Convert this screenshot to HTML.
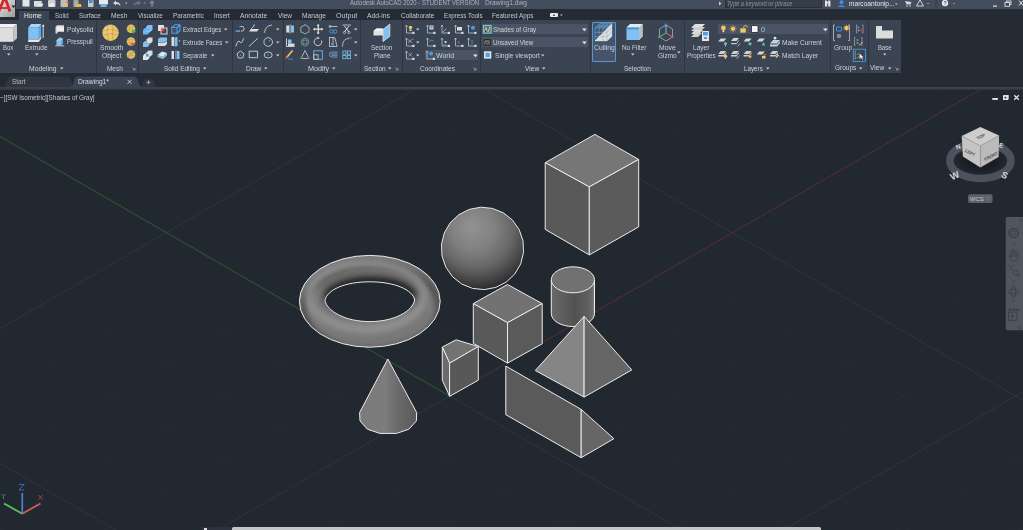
<!DOCTYPE html>
<html><head><meta charset="utf-8"><style>
*{margin:0;padding:0;box-sizing:border-box}
html,body{width:1023px;height:530px;overflow:hidden;background:#212830;font-family:"Liberation Sans",sans-serif}
.a{position:absolute}
.t{position:absolute;white-space:nowrap;font-size:6.8px;line-height:8px;height:8px;color:#dde1e7;transform-origin:0 50%}
.d{position:absolute;width:0;height:0;border-left:2px solid transparent;border-right:2px solid transparent;border-top:2px solid #d0d4da}
svg{overflow:visible}
</style></head><body>
<div class="a" style="left:0px;top:0px;width:1023px;height:9px;background:#444d5d;"></div>
<div class="a" style="left:0px;top:9px;width:1023px;height:11px;background:#242b35;"></div>
<div class="a" style="left:19px;top:11px;width:30px;height:9px;background:#3b4453;"></div>
<div class="a" style="left:0px;top:20px;width:1023px;height:53px;background:#242b35;"></div>
<div class="a" style="left:0px;top:20px;width:901px;height:53px;background:#3b4453;"></div>
<div class="a" style="left:0px;top:73px;width:1023px;height:15px;background:#242b35;"></div>
<svg class="a" style="left:0;top:88px;overflow:hidden" width="1023" height="442" viewBox="0 88 1023 442">
<defs>
<radialGradient id="sph" cx="0.45" cy="0.3" r="0.76" fx="0.36" fy="0.24"><stop offset="0" stop-color="#929292"/><stop offset="0.35" stop-color="#808080"/><stop offset="0.6" stop-color="#676767"/><stop offset="0.8" stop-color="#444"/><stop offset="0.95" stop-color="#262626"/></radialGradient>
<linearGradient id="cone" x1="0" y1="0" x2="1" y2="0"><stop offset="0" stop-color="#7a7a7a"/><stop offset="0.45" stop-color="#7c7c7c"/><stop offset="0.7" stop-color="#686868"/><stop offset="1" stop-color="#5a5a5a"/></linearGradient>
<linearGradient id="cyl" x1="0" y1="0" x2="1" y2="0"><stop offset="0" stop-color="#686868"/><stop offset="0.25" stop-color="#5e5e5e"/><stop offset="0.55" stop-color="#525252"/><stop offset="0.85" stop-color="#5f5f5f"/><stop offset="0.95" stop-color="#6a6a6a"/><stop offset="1" stop-color="#8a8a8a"/></linearGradient>
<radialGradient id="tor" cx="0.5" cy="0.45" r="0.55"><stop offset="0.6" stop-color="#6c6c6c"/><stop offset="0.85" stop-color="#7c7c7c"/><stop offset="1" stop-color="#606060"/></radialGradient>
<filter id="blur2" x="-20%" y="-20%" width="140%" height="140%"><feGaussianBlur stdDeviation="3"/></filter>
<filter id="blur3" x="-30%" y="-50%" width="160%" height="200%"><feGaussianBlur stdDeviation="4"/></filter>
<filter id="blur1" x="-20%" y="-20%" width="140%" height="140%"><feGaussianBlur stdDeviation="1.5"/></filter>
<clipPath id="torclip"><path d="M299.4 301.3a70.4 45.9 0 1 0 140.8 0a70.4 45.9 0 1 0 -140.8 0ZM325 300.5 C327 289.7 345 281.8 369.8 281.8 C394.6 281.8 412.7 289.7 414.7 300 C412.7 311 394.6 321.6 369.8 321.6 C345 321.6 327 311 325 300.5Z" clip-rule="evenodd"/></clipPath>
</defs>
<path d="M0 -451.7L1023 138.9M0 -386.4L1023 204.3M0 132.7L1023 -458.0M0 -321.0L1023 269.6M0 198.0L1023 -392.6M0 -255.7L1023 335.0M0 263.4L1023 -327.2M0 -124.9L1023 465.7M0 394.1L1023 -196.5M0 -59.6L1023 531.0M0 459.5L1023 -131.2M0 5.8L1023 596.4M0 524.8L1023 -65.8M0 71.1L1023 661.8M0 590.2L1023 -0.5M0 201.8L1023 792.5M0 720.9L1023 130.2M0 267.2L1023 857.8M0 786.2L1023 195.6M0 332.5L1023 923.2M0 851.6L1023 261.0M0 397.9L1023 988.5M0 916.9L1023 326.3M0 528.6L1023 1119.2M0 1047.7L1023 457.0M0 1113.0L1023 522.4" stroke="#252c36" stroke-width="1" fill="none"/>
<path d="M0 -190.3L1023 400.3M0 328.7L1023 -261.9M0 136.5L1023 727.1M0 655.5L1023 64.9M0 463.3L1023 1053.9M0 982.3L1023 391.7" stroke="#2e3541" stroke-width="1" fill="none"/>
<path d="M0 136.5L449.5 396" stroke="#2a5a2e" stroke-width="1" fill="none"/>
<path d="M449.5 396L1023 64.9" stroke="#552a30" stroke-width="1" fill="none"/>
<!-- torus -->
<g clip-path="url(#torclip)">
<rect x="295" y="250" width="150" height="100" fill="#787878"/>
<ellipse cx="371" cy="307" rx="67" ry="42.5" fill="none" stroke="#4a4a4a" stroke-width="7" filter="url(#blur2)"/>
<ellipse cx="366" cy="296" rx="57" ry="33" fill="none" stroke="#939393" stroke-width="8" filter="url(#blur2)"/>
<ellipse cx="369.8" cy="293.5" rx="47" ry="19.5" fill="#242424" filter="url(#blur3)"/>
<ellipse cx="372" cy="309" rx="60" ry="37" fill="none" stroke="#888" stroke-width="5" filter="url(#blur2)" opacity="0.6"/>
</g>
<path d="M299.4 301.3a70.4 45.9 0 1 0 140.8 0a70.4 45.9 0 1 0 -140.8 0Z" fill="none" stroke="#e9e9e9" stroke-width="1"/>
<path d="M325 300.5 C327 289.7 345 281.8 369.8 281.8 C394.6 281.8 412.7 289.7 414.7 300 C412.7 311 394.6 321.6 369.8 321.6 C345 321.6 327 311 325 300.5Z" fill="none" stroke="#e9e9e9" stroke-width="1"/>
<!-- sphere -->
<polygon points="523.5,252.5 520.7,263.9 514.8,274.0 506.2,282.1 495.8,287.4 484.3,289.6 472.6,288.4 461.7,284.0 452.5,276.7 445.8,267.1 442.0,256.0 441.5,244.3 444.3,232.9 450.2,222.8 458.8,214.7 469.2,209.4 480.7,207.2 492.4,208.4 503.3,212.8 512.5,220.1 519.2,229.7 523.0,240.8" fill="url(#sph)" stroke="#e9e9e9" stroke-width="1" stroke-linejoin="round"/>
<!-- big cube -->
<g stroke="#ececec" stroke-width="1" stroke-linejoin="round">
<polygon points="594.9,134.4 638.7,159.4 589.3,186.9 545.2,162.7" fill="#757675"/>
<polygon points="545.2,162.7 589.3,186.9 589.3,254.9 545.2,229.4" fill="#595959"/>
<polygon points="589.3,186.9 638.7,159.4 638.7,226.9 589.3,254.9" fill="#5b5b5b"/>
</g>
<!-- cylinder -->
<g stroke="#ececec" stroke-width="1">
<path d="M551.3 279.8 L551.3 313.5 A21.6 13 0 0 0 594.5 313.5 L594.5 279.8 Z" fill="url(#cyl)"/>
<ellipse cx="572.9" cy="279.8" rx="21.6" ry="13" fill="#717171"/>
</g>
<!-- small cube -->
<g stroke="#ececec" stroke-width="1" stroke-linejoin="round">
<polygon points="507.5,284.5 542.2,303.6 507.5,322.7 473.3,303.6" fill="#727272"/>
<polygon points="473.3,303.6 507.5,322.7 507.5,363.1 473.3,343.3" fill="#595959"/>
<polygon points="507.5,322.7 542.2,303.6 542.2,343.8 507.5,363.1" fill="#5a5a5a"/>
</g>
<!-- pyramid -->
<g stroke="#ececec" stroke-width="1" stroke-linejoin="round">
<polygon points="584.1,316.4 535.3,370.5 584.1,397.1" fill="#858585"/>
<polygon points="584.1,316.4 631.8,369.9 584.1,397.1" fill="#666666"/>
</g>
<!-- small wedge piece -->
<g stroke="#ececec" stroke-width="1" stroke-linejoin="round">
<polygon points="442.3,347.1 456.1,339.8 478.3,346.5 449.6,363.2" fill="#737373"/>
<polygon points="442.3,347.1 449.6,363.2 449.6,396.3 442.3,380.2" fill="#6a6a6a"/>
<polygon points="449.6,363.2 478.3,346.5 478.3,380.2 449.6,396.3" fill="#585858"/>
</g>
<!-- long wedge -->
<g stroke="#ececec" stroke-width="1" stroke-linejoin="round">
<polygon points="505.8,366.1 581.2,409.4 581.2,457.7 505.8,414.7" fill="#5a5a5a"/>
<polygon points="581.2,409.4 613.9,438.7 581.2,457.7" fill="#666666"/>
</g>
<!-- cone -->
<path d="M387.8 359 L359.6 412.6 L360 420.9 L367.4 429.2 L379.9 433.4 L396.5 433.4 L408.9 429.2 L416.4 420.9 L416.7 412.6 Z" fill="url(#cone)" stroke="#ececec" stroke-width="1" stroke-linejoin="round"/>
</svg>
<div class="a" style="left:0px;top:86.8px;width:1023px;height:3px;background:linear-gradient(#3b434f,#3a424e 40%,#2c333d);"></div>
<div class="a" style="left:96px;top:20px;width:1px;height:53px;background:#2e3541;"></div>
<div class="a" style="left:138px;top:20px;width:1px;height:53px;background:#2e3541;"></div>
<div class="a" style="left:232px;top:20px;width:1px;height:53px;background:#2e3541;"></div>
<div class="a" style="left:283px;top:20px;width:1px;height:53px;background:#2e3541;"></div>
<div class="a" style="left:360px;top:20px;width:1px;height:53px;background:#2e3541;"></div>
<div class="a" style="left:402px;top:20px;width:1px;height:53px;background:#2e3541;"></div>
<div class="a" style="left:479.5px;top:20px;width:1px;height:53px;background:#2e3541;"></div>
<div class="a" style="left:590px;top:20px;width:1px;height:53px;background:#2e3541;"></div>
<div class="a" style="left:684px;top:20px;width:1px;height:53px;background:#2e3541;"></div>
<div class="a" style="left:830px;top:20px;width:1px;height:53px;background:#2e3541;"></div>
<div class="a" style="left:867.5px;top:20px;width:1px;height:53px;background:#2e3541;"></div>
<div class="a" style="left:0;top:0;width:16px;height:18px;background:linear-gradient(135deg,#e4e4e4,#b9b9b9 60%,#9a9a9a);border-right:1px solid #2a2f37;border-bottom:1px solid #2a2f37"></div>
<svg class="a" style="left:0px;top:0px" width="16" height="18" viewBox="0 0 16 18"><path d="M-1.5 12 L4 -1 L5.5 -1 L10 11.5" stroke="#d62828" stroke-width="2.8" fill="none" stroke-linejoin="bevel"/><path d="M1 8 L8 8" stroke="#d62828" stroke-width="1.8"/><path d="M11.4 5.6 L15.4 5.6 L13.4 8 Z" fill="#1e1e1e"/></svg>
<svg class="a" style="left:0px;top:0px" width="160" height="9" viewBox="0 0 160 9">
<rect x="22.5" y="0" width="7" height="6.5" fill="#e6e6e6"/>
<path d="M34 1 L42 1 L41 6.5 L34 6.5 Z" fill="#dcdcdc"/><path d="M35 6.5 L43 3 L42.5 6.5Z" fill="#f0f0f0"/>
<rect x="48" y="0" width="7.5" height="7" rx="1" fill="#cfcfcf"/><rect x="49.5" y="3.5" width="4.5" height="3" fill="#efefef"/>
<rect x="60.5" y="0" width="7.5" height="7" rx="1" fill="#bdbdbd"/><path d="M63 7 L68 2" stroke="#f2b84a" stroke-width="1.6"/><circle cx="67.5" cy="2" r="1" fill="#e25050"/>
<rect x="73.5" y="0" width="5" height="7" rx="0.8" fill="#a9a9a9"/><path d="M76 4 L81 4 L81.5 7 L76 7Z" fill="#e8b84a"/>
<rect x="88" y="0" width="5.5" height="7" rx="0.8" fill="#c9c9c9"/><rect x="89" y="0" width="3.5" height="3" fill="#3d8fe0"/>
<rect x="99" y="0" width="9" height="4.5" fill="#e9e9e9"/><rect x="100.5" y="4.5" width="6" height="2.5" fill="#6fb8f0"/>
<path d="M113 3 L116 0.5 L116 2 Q120 2 120.5 6 Q119 4 116 4 L116 5.5Z" fill="#d8d8d8"/>
<path d="M125 2.5 L127.5 2.5 L126.2 4Z" fill="#c8c8c8"/>
<path d="M141 3 L138 0.5 L138 2 Q134 2 133.5 6 Q135 4 138 4 L138 5.5Z" fill="#6b7380"/>
<path d="M143.5 2.5 L146 2.5 L144.8 4Z" fill="#8a919c"/>
<circle cx="152" cy="2.5" r="2" fill="#7d8490"/><rect x="151" y="4.5" width="2" height="2" fill="#7d8490"/>
</svg>
<div class="a" style="left:725px;top:0px;width:97px;height:8px;background:#353d4a;border:1px solid #2a3039;border-top:none"></div>
<svg class="a" style="left:718px;top:0px" width="6" height="9" viewBox="0 0 6 9"><path d="M1 1.5 L3.5 3.5 L1 5.5Z" fill="#c9ced6"/></svg>
<svg class="a" style="left:823px;top:0px" width="200" height="9" viewBox="0 0 200 9">
<rect x="2" y="0.5" width="2.2" height="6" fill="#e3e3e3"/><rect x="5.2" y="0.5" width="2.2" height="6" fill="#e3e3e3"/><rect x="3" y="2" width="3.5" height="1.4" fill="#e3e3e3"/>
<circle cx="18.5" cy="2.3" r="2" fill="#3f8fe8"/><path d="M14.5 7 Q18.5 3.5 22.5 7Z" fill="#3f8fe8"/>
<path d="M82 1 L83.5 4.5 L87.5 4.5 L88.5 2 Z" fill="#d4d4d4"/><circle cx="84" cy="6" r="0.8" fill="#d4d4d4"/><circle cx="87" cy="6" r="0.8" fill="#d4d4d4"/>
<path d="M97 0 L93.5 6 L100.5 6Z" fill="none" stroke="#d4d4d4" stroke-width="1"/>
<path d="M104 3 L106 3 L105 4.2Z" fill="#c8c8c8"/>
<rect x="112.5" y="0" width="1" height="8" fill="#333a45"/>
<circle cx="122" cy="3" r="3.2" fill="#e8e8e8"/><text x="120.6" y="5" font-size="5" fill="#3f4858" font-family="Liberation Sans" font-weight="bold">?</text>
<path d="M130 3 L132 3 L131 4.2Z" fill="#c8c8c8"/>
<rect x="170" y="5.5" width="4" height="1.2" fill="#e0e0e0"/>
<rect x="183.5" y="1" width="4.5" height="3.5" fill="none" stroke="#e0e0e0" stroke-width="0.9"/><rect x="182" y="2.5" width="4.5" height="3.8" fill="#3f4858" stroke="#e0e0e0" stroke-width="0.9"/>
<path d="M196 0.5 L200 5.5 M200 0.5 L196 5.5" stroke="#e0e0e0" stroke-width="1"/>
</svg>
<svg class="a" style="left:893.68px;top:2.50px" width="4.64" height="3.50"><path d="M1 0.5 L3.64 0.5 L2.32 2.00Z" fill="#c8ccd2"/></svg>
<div class="a" style="left:549.8px;top:12.9px;width:7.9px;height:4.1px;background:#ececec;border-radius:1px"></div>
<svg class="a" style="left:549.8px;top:12.9px" width="8" height="4.1" viewBox="0 0 8 4.1"><path d="M2.8 3 L3.5 1.2 L4.5 1.2 L5.3 3Z" fill="#555"/></svg>
<svg class="a" style="left:558.57px;top:13.50px" width="4.86" height="3.62"><path d="M1 0.5 L3.86 0.5 L2.43 2.12Z" fill="#c8ccd2"/></svg>
<div class="a" style="left:424.9px;top:50px;width:53.1px;height:10px;background:#4a5465;"></div>
<div class="a" style="left:481.8px;top:23.7px;width:106.5px;height:10.6px;background:#4a5465;"></div>
<div class="a" style="left:481.8px;top:37px;width:106.5px;height:10.2px;background:#4a5465;"></div>
<div class="a" style="left:717.7px;top:23.7px;width:110.2px;height:10.6px;background:#4a5465;"></div>
<div class="a" style="left:591.8px;top:22.4px;width:24.2px;height:39.4px;background:#45546a;border:1px solid #5b96cc;border-radius:1px"></div>
<svg class="a" style="left:0;top:20px" width="901" height="53" viewBox="0 20 901 53">
<!-- Box -->
<path d="M0 27.5 L13.1 27.5 L13.1 41.8 L0 41.8Z" fill="#dedede"/>
<path d="M0 24 L4 24 L17 24 L13.1 27.5 L0 27.5Z" fill="#f2f2f2"/>
<path d="M13.1 27.5 L17 24 L17 38.2 L13.1 41.8Z" fill="#c4c4c4"/>
<!-- Extrude -->
<path d="M28.2 27.5 L38.9 27.5 L38.9 39.4 L28.2 39.4Z" fill="#7fc1f3"/>
<path d="M28.2 27.5 L31.2 24 L41.2 24 L38.9 27.5Z" fill="#a6d6f8"/>
<path d="M38.9 27.5 L41.2 24 L41.2 36.5 L38.9 39.4Z" fill="#5aa6e6"/>
<path d="M28.2 39.4 L38.9 39.4 L41.2 36.5 L41.2 38.5 L38.9 42 L28.2 42Z" fill="#e6e6e6"/>
<path d="M43.2 38 L43.2 25.5" stroke="#e8e8e8" stroke-width="0.9"/><path d="M41.8 26.5 L43.2 24.2 L44.6 26.5Z" fill="#e8e8e8"/>
<!-- Polysolid -->
<path d="M55.5 27 L57 25.2 L64 25.2 L64 31.5 L57.5 31.5 L57.5 33.5 L55.5 33.5Z" fill="#dcdcdc"/><path d="M57 27 L64 27 L64 31.5 L57 31.5Z" fill="#efefef"/>
<!-- Presspull -->
<path d="M56.5 40.5 L58.5 38.6 L63 38.6 L63 43.5 L61 45.2 L56.5 45.2Z" fill="#7fc1f3"/><path d="M56.5 40.5 L58.5 38.6 L63 38.6 L61 40.5Z" fill="#a6d6f8"/><path d="M61 40.5 L63 38.6 L63 43.5 L61 45.2Z" fill="#5aa6e6"/>
<path d="M55.3 45.8 L64.2 45.8" stroke="#dcdcdc" stroke-width="0.9"/><path d="M59 38.3 L60 37 L61 38.3Z" fill="#e0e0e0"/>
<!-- Smooth object -->
<circle cx="110.5" cy="32.7" r="8.2" fill="#e8c46a"/><circle cx="108" cy="30" r="4" fill="#f2d68a" opacity="0.6"/>
<path d="M103 31 Q110.5 28 118 31 M103.5 35 Q110.5 32 117.5 35 M108 25 Q106 33 108.5 40.5 M113 25 Q112 33 113 40.5" stroke="#b8923a" stroke-width="0.5" fill="none"/>
<!-- mesh small -->
<circle cx="131" cy="28.7" r="4.3" fill="#e8c46a"/><path d="M127 27.5 Q131 26 135 27.5 M127 30 Q131 28.5 135 30 M129.5 24.6 Q128.5 28.7 129.5 32.8 M132.5 24.6 Q131.5 28.7 132.5 32.8" stroke="#b8923a" stroke-width="0.4" fill="none"/><path d="M131.5 31.5 L135.5 31.5 M133.5 29.5 L133.5 33.5" stroke="#3bc24a" stroke-width="1.4"/>
<circle cx="131" cy="41.5" r="4.3" fill="#e8c46a"/><path d="M127 40.3 Q131 38.8 135 40.3 M127 42.8 Q131 41.3 135 42.8 M129.5 37.4 Q128.5 41.5 129.5 45.6 M132.5 37.4 Q131.5 41.5 132.5 45.6" stroke="#b8923a" stroke-width="0.4" fill="none"/><path d="M130.5 44 L135.5 44" stroke="#d43a3a" stroke-width="1.4"/>
<circle cx="131" cy="54.5" r="4.3" fill="#e8c46a"/><path d="M127 53.3 Q131 51.8 135 53.3 M127 55.8 Q131 54.3 135 55.8 M129.5 50.4 Q128.5 54.5 129.5 58.6 M132.5 50.4 Q131.5 54.5 132.5 58.6" stroke="#b8923a" stroke-width="0.4" fill="none"/><path d="M127.5 57.5 L134.5 51" stroke="#9a9a9a" stroke-width="1"/>
<!-- solid editing col1 -->
<path d="M146 27 L148 25 L152.5 25 L152.5 29.5 L150.5 31.5 L146 31.5Z" fill="#7fc1f3"/><path d="M143 30 L145 28 L149.5 28 L149.5 32.5 L147.5 34.5 L143 34.5Z" fill="#6db6ef"/><path d="M146 31.5 L150.5 31.5 L152.5 29.5" stroke="#a6d6f8" stroke-width="0.5" fill="none"/>
<path d="M146.5 39.5 L148.5 37.5 L152.5 37.5 L152.5 41.5 L150.5 43.5 L146.5 43.5Z" fill="#dcdcdc"/><path d="M143 43 L145 41 L146.5 41 L146.5 43.5 L149.5 43.5 L149.5 45 L147.5 47 L143 47Z" fill="#7fc1f3"/>
<path d="M146.5 52.5 L148.5 50.5 L152.5 50.5 L152.5 54.5 L150.5 56.5 L146.5 56.5Z" fill="#d8d8d8"/><path d="M143 55.5 L145 53.5 L149.5 53.5 L149.5 58 L147.5 60 L143 60Z" fill="#e6e6e6"/><rect x="146" y="54" width="2.6" height="2.6" fill="#3d9be9"/>
<!-- col2 -->
<rect x="158" y="25" width="6" height="6" fill="#e0e0e0"/><rect x="161" y="28" width="6" height="6" fill="none" stroke="#d0d0d0" stroke-width="1.1"/><rect x="161.3" y="28.3" width="3" height="3" fill="#e04848"/>
<path d="M158 39 L160 37.5 L167 37.5 L167 40.5 L165 42 L158 42Z" fill="#7fc1f3"/><path d="M158 42.5 L165 42.5 L167 41 L167 44 L165 46 L158 46Z" fill="#dcdcdc"/>
<path d="M157.5 55 L162 51.5 L167 53 L163 57Z" fill="#e4e4e4"/><path d="M157.5 55 L163 57 L167 53 L167 55.5 L163 59 L157.5 57Z" fill="#7fc1f3"/>
<!-- col3 -->
<path d="M171.8 27.5 L174.8 24.8 L180 24.8 L180 30.5 L177 33.3 L171.8 33.3Z M171.8 27.5 L177 27.5 L180 24.8 M177 27.5 L177 33.3" fill="none" stroke="#4aa3ec" stroke-width="1.1" stroke-linejoin="round"/><rect x="173.3" y="29" width="2.3" height="2.5" fill="#5a5a5a"/>
<rect x="171.5" y="37" width="2.5" height="9" fill="#dcdcdc"/><path d="M174.5 37.5 L177.5 37 L177.5 46 L174.5 46.5Z" fill="#7fc1f3"/><path d="M178.5 40.5 L180.5 40.5 L179.5 41.8Z" fill="#ddd"/>
<rect x="171.5" y="51" width="2.5" height="8" fill="#dcdcdc"/><rect x="175.5" y="50.5" width="1" height="9" fill="#7fc1f3"/><rect x="177" y="51" width="2.5" height="8" fill="#7fc1f3"/>
<!-- draw -->
<g fill="none" stroke-width="0.9">
<path d="M236.5 31 L240 31 M241 31 L243 31 Q245.5 29 243 26.5 L240 26.5" stroke="#cfd3d8"/><circle cx="236" cy="31.2" r="0.8" fill="#3d9be9" stroke="none"/><circle cx="239.5" cy="31.2" r="0.8" fill="#3d9be9" stroke="none"/><circle cx="240" cy="26.5" r="0.8" fill="#3d9be9" stroke="none"/>
<path d="M249 31.5 L257 31.5 L259 29 L251 29Z" fill="#dedede" stroke="none"/><path d="M251 29 L254 26 L254.5 24.5" stroke="#cfd3d8"/><circle cx="254" cy="25" r="0.8" fill="#3d9be9" stroke="none"/>
<path d="M264.5 33 Q265 26 271.5 25" stroke="#cfd3d8"/><circle cx="264.5" cy="32.5" r="0.8" fill="#3d9be9" stroke="none"/><circle cx="271.5" cy="25.2" r="0.8" fill="#3d9be9" stroke="none"/>
<path d="M236 46 Q238 39 240 42 Q241.5 45 243.5 38.5" stroke="#cfd3d8"/><circle cx="236" cy="46" r="0.8" fill="#3d9be9" stroke="none"/><circle cx="243.5" cy="38.5" r="0.8" fill="#3d9be9" stroke="none"/>
<path d="M249.5 46 L257.5 38.5" stroke="#cfd3d8"/><circle cx="249.5" cy="46" r="0.8" fill="#3d9be9" stroke="none"/><circle cx="257.5" cy="38.5" r="0.8" fill="#3d9be9" stroke="none"/>
<circle cx="268.2" cy="42" r="4.3" stroke="#cfd3d8"/><circle cx="269.6" cy="40.6" r="0.8" fill="#3d9be9" stroke="none"/>
<path d="M240.5 51 L244 53.8 L242.7 58 L238.3 58 L237 53.8Z" stroke="#cfd3d8"/><circle cx="240.5" cy="55" r="0.8" fill="#3d9be9" stroke="none"/>
<rect x="249.2" y="51.2" width="8.3" height="6.5" stroke="#cfd3d8"/><circle cx="249.2" cy="51.2" r="0.8" fill="#3d9be9" stroke="none"/><circle cx="257.5" cy="57.7" r="0.8" fill="#3d9be9" stroke="none"/>
<ellipse cx="268.2" cy="55" rx="4" ry="3" stroke="#cfd3d8"/><circle cx="268.2" cy="55" r="0.8" fill="#3d9be9" stroke="none"/>
</g>
<!-- modify -->
<g>
<rect x="286.3" y="25.5" width="2.8" height="7" fill="#dcdcdc"/><path d="M290 24.5 L290 33.5" stroke="#dcdcdc" stroke-width="0.8"/><rect x="291" y="25.5" width="3" height="7" fill="#7fc1f3"/>
<path d="M305 24.8 L300.8 27.3 L300.8 31.5 L305 34 L309 31.5 L309 27.3Z" fill="none" stroke="#cfd3d8" stroke-width="0.7"/><circle cx="305" cy="24.8" r="0.9" fill="#3d9be9"/><circle cx="301" cy="31.8" r="0.9" fill="#3bb54a"/><circle cx="309" cy="31.8" r="0.9" fill="#d94a4a"/>
<path d="M318.2 24.5 L318.2 34 M313.5 29.2 L323 29.2" stroke="#e6e6e6" stroke-width="1.2"/><path d="M316.7 26 L318.2 24.2 L319.7 26Z M316.7 32.5 L318.2 34.3 L319.7 32.5Z M315 27.7 L313.2 29.2 L315 30.7Z M321.4 27.7 L323.2 29.2 L321.4 30.7Z" fill="#e6e6e6"/>
<circle cx="331.5" cy="31.5" r="1.8" fill="none" stroke="#3d9be9" stroke-width="0.9"/><circle cx="335" cy="31.5" r="1.8" fill="none" stroke="#3d9be9" stroke-width="0.9"/><path d="M329.5 26.5 L337.5 26.5" stroke="#cfd3d8" stroke-width="0.8"/><circle cx="330" cy="26.5" r="1.1" fill="none" stroke="#cfd3d8" stroke-width="0.6"/>
<path d="M342.5 25 L351 25" stroke="#cfd3d8" stroke-width="0.8"/><path d="M344.5 26 L349 32 M349 26 L344.5 32" stroke="#d8d8d8" stroke-width="1"/><circle cx="344.5" cy="32.5" r="1.1" fill="none" stroke="#d8d8d8" stroke-width="0.7"/><circle cx="349" cy="32.5" r="1.1" fill="none" stroke="#d8d8d8" stroke-width="0.7"/>
<path d="M286.5 38.5 L286.5 46.5 L294.5 46.5" stroke="#dcdcdc" stroke-width="0.9" fill="none"/><rect x="288" y="39.5" width="3.5" height="4" fill="#7fc1f3"/><rect x="288" y="43.5" width="6.5" height="2.5" fill="#dcdcdc"/>
<circle cx="305" cy="42" r="4" fill="none" stroke="#4a9a6a" stroke-width="0.8"/><ellipse cx="305" cy="42" rx="4" ry="1.8" fill="none" stroke="#d96a6a" stroke-width="0.7"/><ellipse cx="305" cy="42" rx="1.8" ry="4" fill="none" stroke="#3d9be9" stroke-width="0.7"/>
<path d="M321.5 40.5 A3.8 3.8 0 1 1 318.2 38" stroke="#dcdcdc" stroke-width="0.9" fill="none"/><path d="M317.5 36.8 L319.8 38 L317.5 39.3Z" fill="#dcdcdc"/>
<rect x="329.5" y="37.5" width="3.5" height="9" fill="none" stroke="#cfd3d8" stroke-width="0.8"/><path d="M333 37.5 L335 38 L337 46.5 L333 46.5" fill="none" stroke="#cfd3d8" stroke-width="0.8"/><rect x="331" y="43" width="2" height="2" fill="#3d9be9"/>
<path d="M342.5 46.5 Q342.5 38.5 349 38.5" fill="none" stroke="#cfd3d8" stroke-width="0.8"/><path d="M348 38 L352 38" stroke="#8a9aa8" stroke-width="0.8"/>
<path d="M286.5 57.8 L292.5 50.5" stroke="#e8c46a" stroke-width="1.6"/><circle cx="286.5" cy="57.6" r="1.2" fill="#d94a4a"/><path d="M288 59 L293 59" stroke="#3d9be9" stroke-width="0.8"/>
<path d="M305 50.5 L301 58.5 L309 58.5Z" fill="none" stroke="#cfd3d8" stroke-width="0.8"/><circle cx="305" cy="50.8" r="0.9" fill="#3d9be9"/><circle cx="301.3" cy="58.2" r="0.9" fill="#3bb54a"/><circle cx="308.7" cy="58.2" r="0.9" fill="#d94a4a"/>
<rect x="313.8" y="50.8" width="8.5" height="8.5" fill="none" stroke="#7fc1f3" stroke-width="0.8"/><rect x="313.8" y="54.8" width="4.3" height="4.5" fill="none" stroke="#cfd3d8" stroke-width="0.8"/>
<path d="M337.5 52 L332 52 Q329.5 52 329.5 54.5 Q329.5 57 332 57 L337.5 57 M337.5 53.8 L332.5 53.8 Q331.5 53.8 331.5 54.6 Q331.5 55.3 332.5 55.3 L337.5 55.3" stroke="#7fc1f3" stroke-width="0.7" fill="none"/>
<rect x="342.8" y="51" width="3.2" height="3.2" fill="none" stroke="#7fc1f3" stroke-width="0.8"/><rect x="347.4" y="51" width="3.2" height="3.2" fill="none" stroke="#7fc1f3" stroke-width="0.8"/><rect x="342.8" y="55.5" width="3.2" height="3.2" fill="none" stroke="#7fc1f3" stroke-width="0.8"/><rect x="347.4" y="55.5" width="3.2" height="3.2" fill="none" stroke="#7fc1f3" stroke-width="0.8"/>
</g>
<!-- section plane -->
<path d="M373.5 31 L376.5 28.5 L383 28.5 L383 35.5 L373.5 35.5Z" fill="#e0e0e0"/><path d="M373.5 31 L376.5 28.5 L383 28.5 L380.5 31Z" fill="#f2f2f2"/>
<path d="M383 29.5 L389.8 24 L389.8 36.5 L383 41.5Z" fill="#7fc1f3" stroke="#e4e4e4" stroke-width="0.8"/>
<!-- coordinates -->
<g fill="none" stroke="#cfd3d8" stroke-width="0.7">
<path d="M406.5 25.5 L406.5 33 L413.5 33 M405.5 26.5 L406.5 25 L407.5 26.5"/>
<path d="M427.5 25.5 L427.5 33 L434.5 33 M426.5 26.5 L427.5 25 L428.5 26.5"/>
<path d="M442 25.5 L442 33 L449 33 M441 26.5 L442 25 L443 26.5 M443 32 L446.5 28.5"/>
<path d="M455.5 25.5 L455.5 33 L462.5 33 M454.5 26.5 L455.5 25 L456.5 26.5"/>
<path d="M468.5 25.5 L468.5 33 L475.5 33 M467.5 26.5 L468.5 25 L469.5 26.5"/>
<path d="M406.5 38.5 L406.5 46 L413.5 46 M405.5 39.5 L406.5 38 L407.5 39.5"/>
<path d="M427.5 38.5 L427.5 46 L434.5 46 M426.5 39.5 L427.5 38 L428.5 39.5"/>
<path d="M442 38.5 L442 46 L449 46 M441 39.5 L442 38 L443 39.5"/>
<path d="M455.5 38.5 L455.5 46 L462.5 46 M454.5 39.5 L455.5 38 L456.5 39.5"/>
<path d="M468.5 38.5 L468.5 46 L475.5 46 M467.5 39.5 L468.5 38 L469.5 39.5"/>
<path d="M406.5 51.5 L406.5 59 L413.5 59 M405.5 52.5 L406.5 51 L407.5 52.5"/>
<path d="M427 51.5 L427 59 L434 59 M426 52.5 L427 51 L428 52.5"/>
</g>
<rect x="412.3" y="31.8" width="2.2" height="2.2" fill="#d8dce0"/><rect x="433.3" y="31.8" width="2.2" height="2.2" fill="#d8dce0"/><rect x="447.8" y="31.8" width="2.2" height="2.2" fill="#d8dce0"/><rect x="461.3" y="31.8" width="2.2" height="2.2" fill="#d8dce0"/><rect x="474.3" y="31.8" width="2.2" height="2.2" fill="#d8dce0"/><rect x="412.3" y="44.8" width="2.2" height="2.2" fill="#d8dce0"/><rect x="433.3" y="44.8" width="2.2" height="2.2" fill="#d8dce0"/><rect x="447.8" y="44.8" width="2.2" height="2.2" fill="#d8dce0"/><rect x="461.3" y="44.8" width="2.2" height="2.2" fill="#d8dce0"/><rect x="474.3" y="44.8" width="2.2" height="2.2" fill="#d8dce0"/><rect x="412.3" y="57.8" width="2.2" height="2.2" fill="#d8dce0"/><rect x="432.8" y="57.8" width="2.2" height="2.2" fill="#d8dce0"/><circle cx="410.5" cy="27.5" r="1.8" fill="#e8c46a"/><rect x="409.5" y="29.5" width="2" height="1.5" fill="#ddd"/>
<rect x="429.5" y="25.5" width="4" height="4" fill="#dcdcdc"/><rect x="430.3" y="26.3" width="2.4" height="2" fill="#3d9be9"/>
<rect x="457" y="27" width="5" height="3.5" fill="#dcdcdc"/>
<circle cx="473" cy="27.8" r="2.1" fill="#3d9be9"/>
<path d="M408 43 L412 39.5 M408 39.5 L412 43" stroke="#cfd3d8" stroke-width="0.6"/><circle cx="413" cy="39.3" r="0.7" fill="#3d9be9"/>
<path d="M429 41.5 L432 40 L434 41.5" stroke="#3d9be9" stroke-width="0.8" fill="none"/>
<path d="M443.5 44.5 L446.5 44.5" stroke="#3d9be9" stroke-width="0.8"/><rect x="444.5" y="41" width="2" height="2" fill="#cfd3d8"/>
<text x="457.5" y="44" font-size="5" fill="#3d9be9" font-family="Liberation Sans">z</text>
<text x="470.5" y="44" font-size="5" fill="#3d9be9" font-family="Liberation Sans">3</text>
<path d="M408.5 53 L412 56.5 M412 53 L408.5 56.5" stroke="#cfd3d8" stroke-width="0.6"/>
<circle cx="431" cy="53.5" r="2.1" fill="#3d9be9"/>
</svg>
<svg class="a" style="left:0;top:20px" width="901" height="53" viewBox="0 20 901 53">
<!-- view panel icons -->
<rect x="482.9" y="24.9" width="8.8" height="8.8" fill="#5fd3cc"/><rect x="484" y="26" width="6.6" height="6.6" fill="#6d6d6d"/><path d="M484.5 32 L486 27.5 L487 32 M488 32 L490 27" stroke="#cfcfcf" stroke-width="0.9"/>
<rect x="483.5" y="39" width="7.5" height="6.8" fill="#2c2c2c"/><path d="M485 44.5 L485 41 L489.5 41 M487 44.5 L487 41.5 M489 44.5 L489 41.5" stroke="#d8d8d8" stroke-width="0.7"/>
<rect x="484" y="51.3" width="7.3" height="7.3" fill="#e6e6e6"/><rect x="485.5" y="52.8" width="4.3" height="4.3" fill="#4aa3ec"/>
<!-- culling -->
<defs><clipPath id="cullw"><path d="M595 41 L612 23.7 L612 41Z"/></clipPath></defs>
<g fill="none" stroke-width="0.6">
<path d="M595 28 L607 28 L607 41 L595 41Z M595 28 L600 23.7 L612 23.7 L607 28 M612 23.7 L612 36.5 L607 41 M599 28 L599 41 M603 28 L603 41 M595 32.3 L607 32.3 M595 36.6 L607 36.6 M598.3 25.2 L610.3 25.2 M596.6 26.6 L608.6 26.6 M604 23.7 L599 28 M608 23.7 L603 28 M607 32.3 L612 27.9 M607 36.6 L612 32.2" stroke="#5fb0ef"/>
</g>
<path d="M595 41 L612 23.7 L612 36.5 L607 41Z" fill="#dedede"/>
<g clip-path="url(#cullw)" fill="none" stroke="#a8a8a8" stroke-width="0.5"><path d="M607 28 L607 41 M603 28 L603 41 M595 32.3 L607 32.3 M595 36.6 L607 36.6 M607 32.3 L612 27.9 M607 36.6 L612 32.2 M612 23.7 L607 28"/></g>
<path d="M595 41 L612 23.7" stroke="#f2f2f2" stroke-width="0.7"/>
<!-- no filter -->
<path d="M626.5 27.5 L630 24 L642.5 24 L642.5 36.5 L639 40 Z" fill="#e8e8e8"/><path d="M639 27.5 L642.5 24 L642.5 36.5 L639 40Z" fill="#bdbdbd"/>
<rect x="626.5" y="27.5" width="12.5" height="12.5" fill="#7fc1f3"/><rect x="626.5" y="27.5" width="12.5" height="1.8" fill="#3f92d8"/>
<!-- move gizmo -->
<path d="M666 25 L659.5 29 L659.5 37 L666 41 L672.5 37 L672.5 29 Z" fill="none" stroke="#cfd3d8" stroke-width="0.6"/>
<path d="M666 25 L666 33 L659.5 37 M666 33 L672.5 37" stroke="#cfd3d8" stroke-width="0.6" fill="none"/>
<path d="M666 25 L666 33" stroke="#4aa3ec" stroke-width="0.7"/><path d="M666 33 L660 36.6" stroke="#3bb54a" stroke-width="0.7"/><path d="M666 33 L672 36.6" stroke="#d94a4a" stroke-width="0.7"/>
<rect x="665" y="24" width="2" height="2" fill="none" stroke="#4aa3ec" stroke-width="0.5"/><rect x="658.5" y="36" width="2" height="2" fill="none" stroke="#3bb54a" stroke-width="0.5"/><rect x="671.5" y="36" width="2" height="2" fill="none" stroke="#d94a4a" stroke-width="0.5"/>
<!-- layer properties -->
<path d="M691 28 L695 24 L705 24 L701 28Z" fill="#e0e0e0"/><path d="M691 31 L695 27 L705 27 L701 31Z" fill="#d0d0d0"/><path d="M691 34 L695 30 L703 30 L699 34Z" fill="#dcdcdc"/><path d="M691 37 L695 33 L702 33 L698 37Z" fill="#d0d0d0"/>
<rect x="702" y="31" width="7" height="10" rx="0.5" fill="#e8e8e8"/><rect x="703" y="32" width="5" height="3.5" fill="#4aa3ec"/><rect x="704" y="37" width="3" height="2" fill="#8a8a8a"/>
<!-- layer dropdown icons -->
<circle cx="723.4" cy="28" r="2.4" fill="#f0c860"/><rect x="722.6" y="30.2" width="1.6" height="2" fill="#e8e8e8"/>
<circle cx="733" cy="28.7" r="2" fill="#f0c860"/><g stroke="#f0c860" stroke-width="0.6"><path d="M733 25 L733 32.4 M729.3 28.7 L736.7 28.7 M730.4 26.1 L735.6 31.3 M735.6 26.1 L730.4 31.3"/></g>
<rect x="740.3" y="28.3" width="5.5" height="4.3" fill="#f0c860"/><path d="M743.8 28.3 L743.8 26.3 Q745.5 24.5 747.2 26.3 L747.2 27.5" stroke="#f0c860" stroke-width="0.8" fill="none"/>
<rect x="751.5" y="25.7" width="6.5" height="6.7" fill="#f4f4f4" stroke="#1c1c1c" stroke-width="0.7"/>
<!-- layer small icons -->
<path d="M718.2 41.5 L720.7 38.5 L726.2 38.5 L723.7 41.5Z" fill="#d6d6d6"/><path d="M743.6 41.5 L746.1 38.5 L751.6 38.5 L749.1 41.5Z" fill="#d6d6d6"/><path d="M756.8 41.5 L759.3 38.5 L764.8 38.5 L762.3 41.5Z" fill="#d6d6d6"/>
<path d="M731 41 L733.5 38 L739 38 L736.5 41Z M731 43 L736.5 43 L739 40 L739 41 L736.5 44 L731 44Z" fill="#d6d6d6"/><path d="M731 44.2 L736.5 44.2" stroke="#4aa3ec" stroke-width="0.6"/>
<circle cx="725.5" cy="43.5" r="1.6" fill="#4ec4c8"/><path d="M725.5 45 L725.5 46.5" stroke="#e0e0e0" stroke-width="0.8"/>
<path d="M737.5 46.5 L740 43.5" stroke="#e0e0e0" stroke-width="0.7"/>
<circle cx="750" cy="43.8" r="1.6" fill="#4ec4c8"/>
<path d="M762 45.5 Q762 43 763.5 43 Q765 43 765 45.5Z" fill="#4ec4c8"/><path d="M762.5 43.3 Q763.5 41.5 764.5 43.3" stroke="#4ec4c8" stroke-width="0.6" fill="none"/>
<path d="M770 43.5 L773 40 L780 40 L777 43.5Z M770 44.5 L777 44.5 L780 41 L780 43 L777 46.5 L770 46.5Z" fill="#d0d0d0"/><path d="M770 43.6 L777 43.6 L780 40.3" stroke="#4aa3ec" stroke-width="0.9" fill="none"/><circle cx="775" cy="38.2" r="1.4" fill="#e0e0e0"/>
<path d="M718.2 54 L720.7 51 L726.2 51 L723.7 54Z M718.2 55 L723.7 55 L726.2 52 L726.2 53.5 L723.7 56.5 L718.2 56.5Z" fill="#d0d0d0"/><path d="M731 54 L733.5 51 L739 51 L736.5 54Z M731 55 L736.5 55 L739 52 L739 53.5 L736.5 56.5 L731 56.5Z" fill="#d0d0d0"/><path d="M743.6 54 L746.1 51 L751.6 51 L749.1 54Z M743.6 55 L749.1 55 L751.6 52 L751.6 53.5 L749.1 56.5 L743.6 56.5Z" fill="#d0d0d0"/><path d="M770 54 L772.5 51 L778 51 L775.5 54Z M770 55 L775.5 55 L778 52 L778 53.5 L775.5 56.5 L770 56.5Z" fill="#d0d0d0"/>
<path d="M756.8 54.5 L759.3 51.5 L764.8 51.5 L762.3 54.5Z" fill="#d6d6d6"/>
<circle cx="725.5" cy="56.2" r="1.7" fill="#f0c860"/><path d="M725.5 57.8 L725.5 59" stroke="#e0e0e0" stroke-width="0.8"/>
<path d="M736.5 58.5 L739.5 55.5" stroke="#e0e0e0" stroke-width="0.7"/><path d="M731 56.7 L736.5 56.7" stroke="#4aa3ec" stroke-width="0.6"/>
<circle cx="750" cy="56.5" r="1.5" fill="#f0c860" stroke="#8a5a2a" stroke-width="0.5"/>
<rect x="762" y="56" width="3.5" height="2.5" fill="#f0c860"/><path d="M764 56 L764 55 Q765 53.8 766 55" stroke="#f0c860" stroke-width="0.6" fill="none"/>
<path d="M776 57.5 L778.5 55" stroke="#f0c860" stroke-width="1.4"/><path d="M777 54 L779.5 56.5" stroke="#e0e0e0" stroke-width="0.6"/>
<!-- group -->
<path d="M835 25 L833.5 25 L833.5 40.5 L835 40.5 M848 25 L849.5 25 L849.5 40.5 L848 40.5" stroke="#cfd3d8" stroke-width="0.7" fill="none"/>
<rect x="836.5" y="27" width="5" height="4" rx="0.5" fill="none" stroke="#4aa3ec" stroke-width="0.9"/><circle cx="839" cy="36" r="2.3" fill="#8a8a8a"/>
<circle cx="846.5" cy="28" r="2.2" fill="#f0c860"/><g stroke="#f0c860" stroke-width="0.5"><path d="M846.5 24.5 L846.5 31.5 M843 28 L850 28 M844 25.5 L849 30.5 M849 25.5 L844 30.5"/></g>
<path d="M857.5 25 L856.5 25 L856.5 33 L857.5 33 M862 25 L863 25 L863 33 L862 33" stroke="#cfd3d8" stroke-width="0.5" fill="none"/><circle cx="858.5" cy="27.5" r="1" fill="#4aa3ec"/><circle cx="858.5" cy="30.5" r="1" fill="#9a9a9a"/><path d="M860 29 L862.5 31.5 M862.5 29 L860 31.5" stroke="#d94a4a" stroke-width="0.8"/>
<path d="M855.5 37.5 L854.5 37.5 L854.5 45.5 L855.5 45.5 M861 37.5 L862 37.5 L862 45.5 L861 45.5" stroke="#cfd3d8" stroke-width="0.5" fill="none"/><circle cx="857.5" cy="40" r="1" fill="#4aa3ec"/><circle cx="857.5" cy="43" r="1" fill="#9a9a9a"/><path d="M859 45.5 L862.5 42" stroke="#f0c860" stroke-width="1"/><circle cx="862.5" cy="42" r="0.7" fill="#d94a4a"/>
<rect x="853.3" y="49.2" width="12.2" height="12.2" fill="none" stroke="#4aa3ec" stroke-width="0.8"/>
<path d="M856 51 L855.2 51 L855.2 59 L856 59" stroke="#cfd3d8" stroke-width="0.5" fill="none"/><path d="M856.5 54 L857.5 55 L859 52.5 M856.5 57.5 L857.5 58.5 L859 56" stroke="#3bc24a" stroke-width="0.8" fill="none"/><path d="M859.5 53.5 L859.5 59 L861 57.8 L862.5 60 L863 59.6 L862 57.5 L863.5 57.3Z" fill="#e8e8e8"/>
<!-- base -->
<path d="M876 26 L882 26 L882 30.5 L893 30.5 L893 38.5 L876 38.5Z" fill="#dcdcdc"/>
</svg>
<svg class="a" style="left:5.64px;top:52.50px" width="5.52" height="4.00"><path d="M1 0.5 L4.52 0.5 L2.76 2.50Z" fill="#cfd3d8"/></svg>
<svg class="a" style="left:33.74px;top:52.50px" width="5.52" height="4.00"><path d="M1 0.5 L4.52 0.5 L2.76 2.50Z" fill="#cfd3d8"/></svg>
<svg class="a" style="left:58.84px;top:67.00px" width="5.52" height="4.00"><path d="M1 0.5 L4.52 0.5 L2.76 2.50Z" fill="#cfd3d8"/></svg>
<svg class="a" style="left:202.04px;top:67.00px" width="5.52" height="4.00"><path d="M1 0.5 L4.52 0.5 L2.76 2.50Z" fill="#cfd3d8"/></svg>
<svg class="a" style="left:263.34px;top:67.00px" width="5.52" height="4.00"><path d="M1 0.5 L4.52 0.5 L2.76 2.50Z" fill="#cfd3d8"/></svg>
<svg class="a" style="left:330.74px;top:67.00px" width="5.52" height="4.00"><path d="M1 0.5 L4.52 0.5 L2.76 2.50Z" fill="#cfd3d8"/></svg>
<svg class="a" style="left:387.24px;top:67.00px" width="5.52" height="4.00"><path d="M1 0.5 L4.52 0.5 L2.76 2.50Z" fill="#cfd3d8"/></svg>
<svg class="a" style="left:541.04px;top:67.00px" width="5.52" height="4.00"><path d="M1 0.5 L4.52 0.5 L2.76 2.50Z" fill="#cfd3d8"/></svg>
<svg class="a" style="left:764.54px;top:67.00px" width="5.52" height="4.00"><path d="M1 0.5 L4.52 0.5 L2.76 2.50Z" fill="#cfd3d8"/></svg>
<svg class="a" style="left:858.24px;top:67.00px" width="5.52" height="4.00"><path d="M1 0.5 L4.52 0.5 L2.76 2.50Z" fill="#cfd3d8"/></svg>
<svg class="a" style="left:886.74px;top:67.00px" width="5.52" height="4.00"><path d="M1 0.5 L4.52 0.5 L2.76 2.50Z" fill="#cfd3d8"/></svg>
<svg class="a" style="left:223.24px;top:28.00px" width="5.52" height="4.00"><path d="M1 0.5 L4.52 0.5 L2.76 2.50Z" fill="#cfd3d8"/></svg>
<svg class="a" style="left:224.24px;top:41.00px" width="5.52" height="4.00"><path d="M1 0.5 L4.52 0.5 L2.76 2.50Z" fill="#cfd3d8"/></svg>
<svg class="a" style="left:210.24px;top:54.00px" width="5.52" height="4.00"><path d="M1 0.5 L4.52 0.5 L2.76 2.50Z" fill="#cfd3d8"/></svg>
<svg class="a" style="left:275.04px;top:28.00px" width="5.52" height="4.00"><path d="M1 0.5 L4.52 0.5 L2.76 2.50Z" fill="#cfd3d8"/></svg>
<svg class="a" style="left:275.04px;top:41.00px" width="5.52" height="4.00"><path d="M1 0.5 L4.52 0.5 L2.76 2.50Z" fill="#cfd3d8"/></svg>
<svg class="a" style="left:275.04px;top:54.00px" width="5.52" height="4.00"><path d="M1 0.5 L4.52 0.5 L2.76 2.50Z" fill="#cfd3d8"/></svg>
<svg class="a" style="left:352.94px;top:28.00px" width="5.52" height="4.00"><path d="M1 0.5 L4.52 0.5 L2.76 2.50Z" fill="#cfd3d8"/></svg>
<svg class="a" style="left:352.94px;top:41.00px" width="5.52" height="4.00"><path d="M1 0.5 L4.52 0.5 L2.76 2.50Z" fill="#cfd3d8"/></svg>
<svg class="a" style="left:352.94px;top:54.00px" width="5.52" height="4.00"><path d="M1 0.5 L4.52 0.5 L2.76 2.50Z" fill="#cfd3d8"/></svg>
<svg class="a" style="left:415.24px;top:28.00px" width="5.52" height="4.00"><path d="M1 0.5 L4.52 0.5 L2.76 2.50Z" fill="#cfd3d8"/></svg>
<svg class="a" style="left:415.24px;top:41.00px" width="5.52" height="4.00"><path d="M1 0.5 L4.52 0.5 L2.76 2.50Z" fill="#cfd3d8"/></svg>
<svg class="a" style="left:415.24px;top:54.00px" width="5.52" height="4.00"><path d="M1 0.5 L4.52 0.5 L2.76 2.50Z" fill="#cfd3d8"/></svg>
<svg class="a" style="left:540.24px;top:54.00px" width="5.52" height="4.00"><path d="M1 0.5 L4.52 0.5 L2.76 2.50Z" fill="#cfd3d8"/></svg>
<svg class="a" style="left:630.34px;top:52.50px" width="5.52" height="4.00"><path d="M1 0.5 L4.52 0.5 L2.76 2.50Z" fill="#cfd3d8"/></svg>
<svg class="a" style="left:676.14px;top:51.00px" width="5.52" height="4.00"><path d="M1 0.5 L4.52 0.5 L2.76 2.50Z" fill="#cfd3d8"/></svg>
<svg class="a" style="left:881.94px;top:52.50px" width="5.52" height="4.00"><path d="M1 0.5 L4.52 0.5 L2.76 2.50Z" fill="#cfd3d8"/></svg>
<svg class="a" style="left:471.58px;top:53.70px" width="6.84" height="4.75"><path d="M1 0.5 L5.84 0.5 L3.42 3.25Z" fill="#e0e4ea"/></svg>
<svg class="a" style="left:581.28px;top:27.70px" width="6.84" height="4.75"><path d="M1 0.5 L5.84 0.5 L3.42 3.25Z" fill="#e0e4ea"/></svg>
<svg class="a" style="left:581.28px;top:41.00px" width="6.84" height="4.75"><path d="M1 0.5 L5.84 0.5 L3.42 3.25Z" fill="#e0e4ea"/></svg>
<svg class="a" style="left:822.28px;top:27.70px" width="6.84" height="4.75"><path d="M1 0.5 L5.84 0.5 L3.42 3.25Z" fill="#e0e4ea"/></svg>
<svg class="a" style="left:132.1px;top:66.6px" width="4" height="4" viewBox="0 0 4 4"><path d="M0.5 0.5 L3 3 M3 1 L3 3 L1 3" stroke="#aab0b8" stroke-width="0.7" fill="none"/></svg>
<svg class="a" style="left:395px;top:66.6px" width="4" height="4" viewBox="0 0 4 4"><path d="M0.5 0.5 L3 3 M3 1 L3 3 L1 3" stroke="#aab0b8" stroke-width="0.7" fill="none"/></svg>
<svg class="a" style="left:473px;top:66.6px" width="4" height="4" viewBox="0 0 4 4"><path d="M0.5 0.5 L3 3 M3 1 L3 3 L1 3" stroke="#aab0b8" stroke-width="0.7" fill="none"/></svg>
<svg class="a" style="left:894.5px;top:66.6px" width="4" height="4" viewBox="0 0 4 4"><path d="M0.5 0.5 L3 3 M3 1 L3 3 L1 3" stroke="#aab0b8" stroke-width="0.7" fill="none"/></svg>
<svg class="a" style="left:0;top:73px" width="1023" height="16" viewBox="0 73 1023 16"><path d="M-2 87 L3 87 Q5.5 87 6.5 82 Q7.5 76.5 11 76.5 L67 76.5 Q70.5 76.5 71.5 82 Q72.5 87 75 87 Z" fill="#2f3641"/><path d="M68 87 L70.5 87 Q72.5 87 73.5 82 Q74.5 76.5 78 76.5 L134 76.5 Q137.5 76.5 138.5 82 Q139.5 87 142 87 Z" fill="#3b4453"/><path d="M140 87 Q142 87 143 83 Q144 79 147 79 L151 79 Q154 79.5 154.5 83.5 Q155 87 157 87Z" fill="#2f3641"/><path d="M127.5 79.8 L131.5 83.8 M131.5 79.8 L127.5 83.8" stroke="#cfd3d8" stroke-width="0.9"/><path d="M146.5 82.3 L150.5 82.3 M148.5 80.3 L148.5 84.3" stroke="#9aa0a8" stroke-width="1"/></svg>
<svg class="a" style="left:990px;top:92px" width="33" height="10" viewBox="0 0 33 10"><rect x="2.3" y="6" width="5.6" height="1.9" fill="#e6e6e6"/><path d="M13.3 4.2 L14.6 2.9 L18.8 2.9 L18.8 6.9 L17.5 8.2" fill="#c8c8c8"/><rect x="13" y="3.2" width="4.8" height="4.8" fill="#e6e6e6"/><rect x="14.6" y="4.8" width="1.6" height="1.6" fill="#111"/><path d="M24.2 3.3 L28.8 7.8 M28.8 3.3 L24.2 7.8" stroke="#e6e6e6" stroke-width="1.3"/></svg>
<svg class="a" style="left:940px;top:115px" width="83" height="95" viewBox="940 115 83 95">
<defs><radialGradient id="vcsh" cx="0.5" cy="0.5" r="0.5"><stop offset="0" stop-color="#14181d"/><stop offset="0.6" stop-color="#1a1f26"/><stop offset="1" stop-color="#222931"/></radialGradient></defs>
<ellipse cx="980.4" cy="161" rx="27" ry="14" fill="url(#vcsh)"/>
<ellipse cx="980.4" cy="160.7" rx="30.6" ry="17.8" fill="none" stroke="#4b525d" stroke-width="7.6"/>
<text x="955.5" y="149" font-size="6.5" font-weight="bold" fill="#d4d7dc" font-family="Liberation Sans" transform="rotate(-20 958 146)">N</text>
<text x="999" y="148" font-size="6.5" font-weight="bold" fill="#d4d7dc" font-family="Liberation Sans" transform="rotate(20 1002 146)">E</text>
<polygon points="980.4,127.1 999.1,135.6 980.4,145.8 961.7,136.1" fill="#cdcdcd"/>
<polygon points="961.7,136.1 980.4,145.8 980.4,167.5 962.9,156.5" fill="#c4c4c4"/>
<polygon points="980.4,145.8 999.1,135.6 998.6,157 980.4,167.5" fill="#bababa"/>
<path d="M961.7 136.1 L980.4 145.8 L999.1 135.6 M980.4 145.8 L980.4 167.5" stroke="#9a9a9a" stroke-width="0.5" fill="none"/>
<text x="976.5" y="138.5" font-size="4.3" font-weight="bold" fill="#4a4a4a" font-family="Liberation Sans" transform="rotate(-28 980 136.5)">TOP</text>
<text x="965" y="154" font-size="4.3" font-weight="bold" fill="#4a4a4a" font-family="Liberation Sans" transform="rotate(28 970 152)">LEFT</text>
<text x="983" y="158.5" font-size="4.3" font-weight="bold" fill="#4a4a4a" font-family="Liberation Sans" transform="rotate(-28 989 155)">FRONT</text>
<text x="949.5" y="178.5" font-size="9.5" font-weight="bold" fill="#d4d7dc" font-family="Liberation Sans" transform="rotate(-25 955 174)">W</text>
<text x="1002" y="178.5" font-size="9" font-weight="bold" fill="#d4d7dc" font-family="Liberation Sans" transform="rotate(28 1005.5 174.5)">S</text>
<rect x="968" y="194.2" width="24.6" height="8.7" rx="2" fill="#5a616c"/>
<text x="969.8" y="200.8" font-size="6" fill="#c7cbd1" font-family="Liberation Sans">WCS</text>
<circle cx="988" cy="198.5" r="1.8" fill="none" stroke="#7a818b" stroke-width="0.6"/>
</svg>
<svg class="a" style="left:1005px;top:216px" width="18" height="116" viewBox="1005 216 18 116">
<rect x="1005.7" y="217.1" width="19" height="113.2" rx="2" fill="#50565f"/>
<g stroke="#3b4048" fill="none">
<rect x="1020" y="218.8" width="2.2" height="2.2" stroke-width="0.6"/>
<circle cx="1013.6" cy="233" r="4.6" stroke-width="1.5"/><circle cx="1013.6" cy="233" r="2.3" stroke-width="0.9"/>
<path d="M1012.2 243.8 L1015 243.8 L1013.6 245.3Z" fill="#3b4048" stroke="none"/>
<path d="M1010 258 L1010 251.5 M1012 257 L1012 249.5 M1014 257 L1014 249 M1016 257 L1016 250 M1018 256 L1018 252 M1009.5 255 Q1011 261.5 1014.5 261 Q1018 260.5 1018.5 255.5" stroke-width="1"/>
<path d="M1008 264.5 L1014.5 271 M1014 264.5 L1008 270.5" stroke-width="0.9"/><circle cx="1015.6" cy="272.8" r="2.4" stroke-width="0.9"/><path d="M1017.3 274.6 L1019.6 276.8" stroke-width="1.2"/>
<path d="M1012.2 280.3 L1015 280.3 L1013.6 281.8Z" fill="#3b4048" stroke="none"/>
<ellipse cx="1013.6" cy="291.7" rx="2.2" ry="6" stroke-width="0.9"/><ellipse cx="1013.6" cy="291.7" rx="5.5" ry="2.3" stroke-width="0.9"/>
<path d="M1012.2 300.8 L1015 300.8 L1013.6 302.3Z" fill="#3b4048" stroke="none"/>
<rect x="1008.3" y="308.5" width="3" height="2.3" fill="#3b4048" stroke="none"/><rect x="1012.3" y="308.5" width="3" height="2.3" fill="#3b4048" stroke="none"/><rect x="1016.3" y="308.5" width="3" height="2.3" fill="#3b4048" stroke="none"/>
<rect x="1008.5" y="312.2" width="8.5" height="8.1" stroke-width="1"/><path d="M1011.3 314 L1014.6 316.2 L1011.3 318.4Z" fill="#3b4048" stroke="none"/>
<circle cx="1019.5" cy="327.8" r="1.5" stroke-width="0.7"/>
</g>
</svg>
<svg class="a" style="left:0;top:480px" width="50" height="40" viewBox="0 480 50 40">
<path d="M22.3 513.7 L22.3 493" stroke="#4f86d6" stroke-width="1.6"/>
<path d="M22.3 513.7 L4 503.5" stroke="#5cc25c" stroke-width="1.8"/>
<path d="M22.3 513.7 L40.5 503.5" stroke="#d25a5a" stroke-width="1.8"/>
<path d="M19 484.5 L24 484.5 L19 490 L24 490" stroke="#3f7ad6" stroke-width="0.8" fill="none"/>
<path d="M1.5 494 L3.5 496.5 L5.5 494 M3.5 496.5 L3.5 499" stroke="#4cae4c" stroke-width="0.7" fill="none"/>
<path d="M38.5 495 L42.5 499.5 M42.5 495 L38.5 499.5" stroke="#c84a4a" stroke-width="0.8"/>
</svg>
<div class="a" style="left:202px;top:527px;width:30px;height:3px;background:#2c333e;"></div>
<div class="a" style="left:204px;top:528px;width:3px;height:2px;background:#d8d8d8;"></div>
<div class="a" style="left:232px;top:526.8px;width:589.4px;height:3.2px;background:#c4c5c6;border-radius:1.5px 1.5px 0 0"></div>
<span class="t" id="t0" style="left:349.5px;top:-0.90px;color:#aeb4bd;font-size:7px;transform:scaleX(0.861);">Autodesk AutoCAD 2020 - STUDENT VERSION</span>
<span class="t" id="t1" style="left:485px;top:-0.90px;color:#aeb4bd;font-size:7px;transform:scaleX(0.945);">Drawing1.dwg</span>
<span class="t" id="t2" style="left:727px;top:-0.50px;color:#8d949e;font-size:6.6px;transform:scaleX(0.863);font-style:italic">Type a keyword or phrase</span>
<span class="t" id="t3" style="left:848.8px;top:-0.30px;color:#e2e5ea;font-size:7px;transform:scaleX(0.942);">marcoantonip...</span>
<span class="t" id="t4" style="left:24.4px;top:11.70px;color:#e9ecf0;font-size:7px;transform:scaleX(0.953);">Home</span>
<span class="t" id="t5" style="left:54.9px;top:11.70px;color:#c3c8d0;font-size:7px;transform:scaleX(0.869);">Solid</span>
<span class="t" id="t6" style="left:79.2px;top:11.70px;color:#c3c8d0;font-size:7px;transform:scaleX(0.904);">Surface</span>
<span class="t" id="t7" style="left:111.2px;top:11.70px;color:#c3c8d0;font-size:7px;transform:scaleX(0.959);">Mesh</span>
<span class="t" id="t8" style="left:137.8px;top:11.70px;color:#c3c8d0;font-size:7px;transform:scaleX(0.889);">Visualize</span>
<span class="t" id="t9" style="left:172.8px;top:11.70px;color:#c3c8d0;font-size:7px;transform:scaleX(0.915);">Parametric</span>
<span class="t" id="t10" style="left:213.8px;top:11.70px;color:#c3c8d0;font-size:7px;transform:scaleX(0.906);">Insert</span>
<span class="t" id="t11" style="left:240.4px;top:11.70px;color:#c3c8d0;font-size:7px;transform:scaleX(0.971);">Annotate</span>
<span class="t" id="t12" style="left:277.7px;top:11.70px;color:#c3c8d0;font-size:7px;transform:scaleX(0.927);">View</span>
<span class="t" id="t13" style="left:301.9px;top:11.70px;color:#c3c8d0;font-size:7px;transform:scaleX(0.948);">Manage</span>
<span class="t" id="t14" style="left:335.6px;top:11.70px;color:#c3c8d0;font-size:7px;transform:scaleX(1.014);">Output</span>
<span class="t" id="t15" style="left:367px;top:11.70px;color:#c3c8d0;font-size:7px;transform:scaleX(0.967);">Add-ins</span>
<span class="t" id="t16" style="left:400.6px;top:11.70px;color:#c3c8d0;font-size:7px;transform:scaleX(0.931);">Collaborate</span>
<span class="t" id="t17" style="left:443.9px;top:11.70px;color:#c3c8d0;font-size:7px;transform:scaleX(0.888);">Express Tools</span>
<span class="t" id="t18" style="left:492px;top:11.70px;color:#c3c8d0;font-size:7px;transform:scaleX(0.913);">Featured Apps</span>
<span class="t" id="t19" style="left:3.2px;top:44.00px;color:#ced2d9;transform:scaleX(0.875);">Box</span>
<span class="t" id="t20" style="left:25.4px;top:44.00px;color:#ced2d9;transform:scaleX(0.965);">Extrude</span>
<span class="t" id="t21" style="left:67px;top:25.70px;color:#ced2d9;transform:scaleX(0.967);">Polysolid</span>
<span class="t" id="t22" style="left:67px;top:38.40px;color:#ced2d9;transform:scaleX(0.918);">Presspull</span>
<span class="t" id="t23" style="left:99.7px;top:44.00px;color:#ced2d9;transform:scaleX(0.996);">Smooth</span>
<span class="t" id="t24" style="left:101.7px;top:52.00px;color:#ced2d9;transform:scaleX(0.980);">Object</span>
<span class="t" id="t25" style="left:28.6px;top:64.70px;color:#ced2d9;transform:scaleX(0.996);">Modeling</span>
<span class="t" id="t26" style="left:106.7px;top:64.70px;color:#ced2d9;transform:scaleX(0.947);">Mesh</span>
<span class="t" id="t27" style="left:182.8px;top:25.70px;color:#ced2d9;transform:scaleX(0.907);">Extract Edges</span>
<span class="t" id="t28" style="left:182.8px;top:38.50px;color:#ced2d9;transform:scaleX(0.895);">Extrude Faces</span>
<span class="t" id="t29" style="left:182.8px;top:51.50px;color:#ced2d9;transform:scaleX(0.886);">Separate</span>
<span class="t" id="t30" style="left:163.8px;top:64.70px;color:#ced2d9;transform:scaleX(0.950);">Solid Editing</span>
<span class="t" id="t31" style="left:246.4px;top:64.70px;color:#ced2d9;transform:scaleX(0.969);">Draw</span>
<span class="t" id="t32" style="left:307.8px;top:64.70px;color:#ced2d9;transform:scaleX(1.060);">Modify</span>
<span class="t" id="t33" style="left:370.9px;top:44.00px;color:#ced2d9;transform:scaleX(0.935);">Section</span>
<span class="t" id="t34" style="left:373.8px;top:52.00px;color:#ced2d9;transform:scaleX(0.947);">Plane</span>
<span class="t" id="t35" style="left:363.9px;top:64.70px;color:#ced2d9;transform:scaleX(0.952);">Section</span>
<span class="t" id="t36" style="left:436.3px;top:51.50px;color:#ced2d9;transform:scaleX(1.022);">World</span>
<span class="t" id="t37" style="left:420.4px;top:64.70px;color:#ced2d9;transform:scaleX(0.954);">Coordinates</span>
<span class="t" id="t38" style="left:493px;top:25.70px;color:#ced2d9;transform:scaleX(0.915);">Shades of Gray</span>
<span class="t" id="t39" style="left:492.6px;top:38.50px;color:#ced2d9;transform:scaleX(0.930);">Unsaved View</span>
<span class="t" id="t40" style="left:494.5px;top:51.50px;color:#ced2d9;transform:scaleX(0.972);">Single viewport</span>
<span class="t" id="t41" style="left:524.8px;top:64.70px;color:#ced2d9;transform:scaleX(0.967);">View</span>
<span class="t" id="t42" style="left:593.7px;top:44.00px;color:#ced2d9;transform:scaleX(0.995);">Culling</span>
<span class="t" id="t43" style="left:621.7px;top:44.00px;color:#ced2d9;transform:scaleX(0.950);">No Filter</span>
<span class="t" id="t44" style="left:658.5px;top:44.00px;color:#ced2d9;transform:scaleX(1.006);">Move</span>
<span class="t" id="t45" style="left:657.6px;top:52.00px;color:#ced2d9;transform:scaleX(0.945);">Gizmo</span>
<span class="t" id="t46" style="left:692.8px;top:44.00px;color:#ced2d9;transform:scaleX(0.959);">Layer</span>
<span class="t" id="t47" style="left:686.9px;top:52.00px;color:#ced2d9;transform:scaleX(0.926);">Properties</span>
<span class="t" id="t48" style="left:624px;top:64.70px;color:#ced2d9;transform:scaleX(0.961);">Selection</span>
<span class="t" id="t49" style="left:760.9px;top:25.70px;color:#a9c7e8;transform:scaleX(1.100);">0</span>
<span class="t" id="t50" style="left:781.9px;top:38.50px;color:#ced2d9;transform:scaleX(0.968);">Make Current</span>
<span class="t" id="t51" style="left:781.9px;top:51.50px;color:#ced2d9;transform:scaleX(0.970);">Match Layer</span>
<span class="t" id="t52" style="left:744.4px;top:64.70px;color:#ced2d9;transform:scaleX(0.920);">Layers</span>
<span class="t" id="t53" style="left:833.6px;top:44.10px;color:#ced2d9;transform:scaleX(0.953);">Group</span>
<span class="t" id="t54" style="left:877.7px;top:44.10px;color:#ced2d9;transform:scaleX(0.875);">Base</span>
<span class="t" id="t55" style="left:834.9px;top:64.20px;color:#ced2d9;transform:scaleX(0.955);">Groups</span>
<span class="t" id="t56" style="left:870.2px;top:64.20px;color:#ced2d9;transform:scaleX(0.967);">View</span>
<span class="t" id="t57" style="left:11.7px;top:78.20px;color:#b9bec6;font-size:7px;transform:scaleX(0.907);">Start</span>
<span class="t" id="t58" style="left:78.2px;top:78.20px;color:#d9dde3;font-size:7px;transform:scaleX(0.959);">Drawing1*</span>
<span class="t" id="t59" style="left:0px;top:93.50px;color:#c4c8ce;font-size:6.6px;transform:scaleX(0.965);">−][SW Isometric][Shades of Gray]</span>
</body></html>
